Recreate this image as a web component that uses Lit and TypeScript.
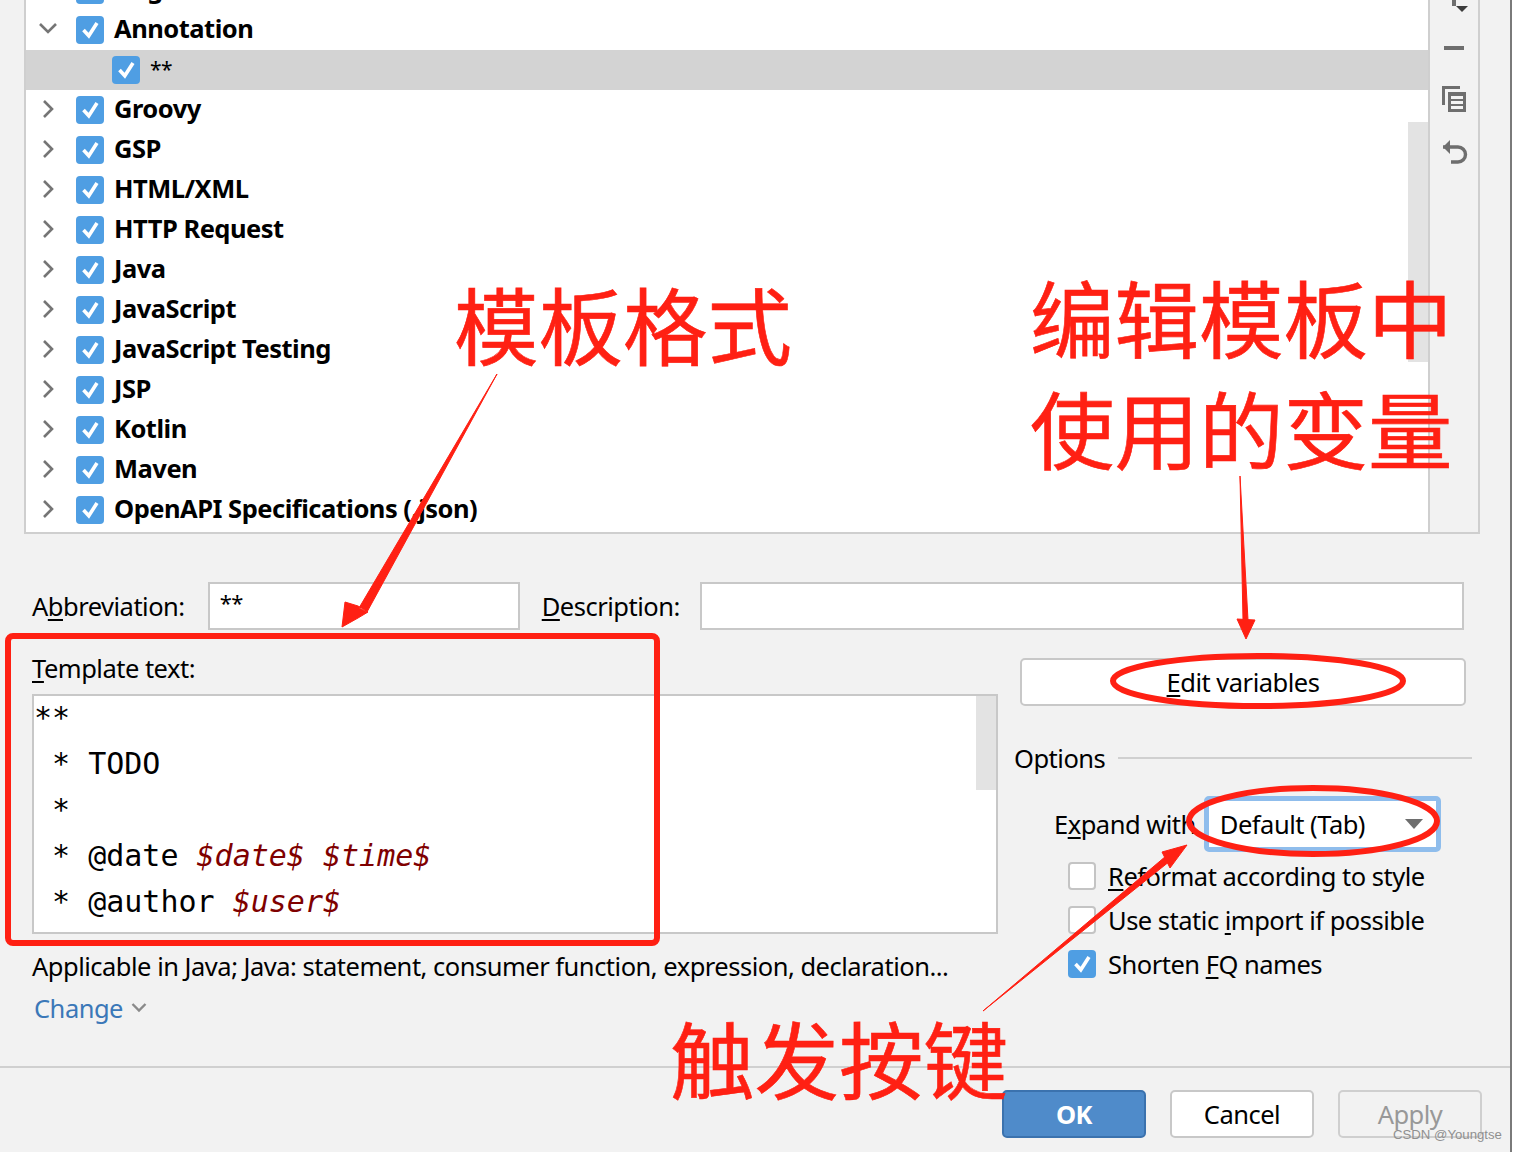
import { LitElement, html, css, svg } from "lit";
import { customElement } from "lit/decorators.js";

const check = html`<svg viewBox="0 0 28 28" width="28" height="28"><rect width="28" height="28" rx="4" fill="#4f9ee3"/><path d="M7.500 14L12.800 19.800L21 7" fill="none" stroke="#fff" stroke-width="3.600"/></svg>`;
const right = html`<svg class="chev" viewBox="0 0 16 20" width="16" height="20"><path d="M4 2l8 8-8 8" fill="none" stroke="#757575" stroke-width="2.6"/></svg>`;
const down = html`<svg class="chev" viewBox="0 0 20 16" width="20" height="16"><path d="M2 3l8 8 8-8" fill="none" stroke="#757575" stroke-width="2.6"/></svg>`;

const groups = ["Groovy", "GSP", "HTML/XML", "HTTP Request", "Java", "JavaScript", "JavaScript Testing", "JSP", "Kotlin", "Maven", "OpenAPI Specifications (.json)"];

@customElement("app-root")
export class AppRoot extends LitElement {
  static styles = css`
    :host { display: block; width: 1516px; height: 1152px; font-family: "Noto Sans", "Noto Sans CJK SC", sans-serif; color: #000; }
    .page { position: relative; width: 1516px; height: 1152px; background: #f2f2f2; overflow: hidden; font-size: 25.5px; line-height: 34px; letter-spacing: -.5px; }
    .edge { position: absolute; left: 1510px; top: 0; width: 6px; height: 1152px; background: #fff; border-left: 2px solid #7a7a7a; box-sizing: border-box; }
    u { text-decoration-thickness: 2px; text-underline-offset: 3px; }

    .panel { margin-left: 24px; width: 1456px; height: 534px; box-sizing: border-box; display: flex; border: 2px solid #cfcfcf; border-width: 0 2px 2px 2px; }
    .tree { position: relative; width: 1402px; height: 532px; background: #fff; overflow: hidden; }
    .rows { margin-top: -30px; }
    .row { display: flex; align-items: center; height: 40px; font-weight: 700; }
    .row.sel { background: #d3d3d3; font-weight: 400; padding-left: 86px; }
    .row.sel span { margin: -3px 0 0 10px; font-size: 21px; }
    .arrow { width: 44px; padding-right: 6px; margin-top: -2px; display: flex; justify-content: center; }
    .chev { display: block; }
    .row svg { flex: none; }
    .row .label { margin: -4px 0 0 10px; }
    .sb { position: absolute; left: 1382px; top: 122px; width: 20px; height: 240px; background: #e3e3e3; }
    .tools { width: 50px; border-left: 2px solid #cfcfcf; box-sizing: border-box; display: flex; flex-direction: column; align-items: center; }
    .tools svg { display: block; }

    .fields { display: flex; align-items: center; margin: 48px 0 0 32px; height: 48px; }
    .input { height: 48px; box-sizing: border-box; background: #fff; border: 2px solid #c8c8c8; font-size: 22px; line-height: 30px; padding: 3px 10px; }
    .abbr { width: 312px; margin-left: 23px; }
    .desc { width: 764px; margin-left: 20px; }
    .dlab { margin-left: 22px; }

    .main { display: flex; margin-top: 28px; }
    .left { margin: -7px 0 0 32px; width: 966px; }
    .tlabel { height: 43px; line-height: 34px; }
    .editor { position: relative; height: 240px; box-sizing: border-box; background: #fff; border: 2px solid #c8c8c8; font-family: "DejaVu Sans Mono", monospace; font-size: 30px; line-height: 46px; letter-spacing: 0; white-space: pre; overflow: hidden; }
    .code { margin-top: -1px; }
    .editor i { color: #7f0000; }
    .esb { position: absolute; right: 0; top: 0; width: 20px; height: 94px; background: #e3e3e3; }
    .app { margin-top: 15px; white-space: nowrap; }
    .change { margin: 8px 0 0 2px; display: flex; align-items: center; gap: 8px; color: #3b78b8; }
    .right { margin-left: 22px; width: 460px; }
    .btn { display: flex; align-items: center; justify-content: center; box-sizing: border-box; height: 48px; background: #fff; border: 2px solid #c8c8c8; border-radius: 5px; }
    .edit { width: 446px; }
    .opt { display: flex; align-items: center; margin: 35px 0 0 -6px; gap: 13px; }
    .opt div { width: 354px; height: 2px; background: #d0d0d0; }
    .expand { display: flex; align-items: center; margin: 21px 0 -6px 34px; }
    .combo { margin-left: 8px; width: 237px; height: 56px; box-sizing: border-box; border: 5px solid #8fbdec; border-radius: 5px; background: #fff; display: flex; align-items: center; justify-content: space-between; padding: 0 13px 0 11px; }
    .tri { width: 0; height: 0; border: 9px solid transparent; border-top: 10px solid #6e6e6e; border-bottom: 0; }
    .ck { display: flex; align-items: center; gap: 12px; height: 28px; margin: 16px 0 0 48px; }
    .box { width: 28px; height: 28px; box-sizing: border-box; background: #fff; border: 2px solid #c4c4c4; border-radius: 4px; }
    .ck svg { display: block; }

    .sep { height: 2px; background: #d0d0d0; margin-top: 41px; }
    .foot { display: flex; gap: 24px; margin: 22px 0 0 1002px; }
    .foot .btn { width: 144px; }
    .ok { background: #4f8bca !important; border-color: #3b72ae !important; color: #fff; font-weight: 700; }
    .apply { background: transparent !important; border-color: #cfcfcf !important; color: #989898; }

    .mark { position: absolute; left: 1393px; top: 1127px; font-size: 13.2px; line-height: 16px; color: #8f8f8f; white-space: nowrap; font-family: "Liberation Sans", sans-serif; letter-spacing: 0; }
    .ink { position: absolute; left: 0; top: 0; pointer-events: none; }
    .note { position: absolute; color: #ff2013; font-family: "Noto Sans CJK SC", sans-serif; font-size: 84.5px; line-height: 100px; letter-spacing: 0; white-space: nowrap; -webkit-text-stroke: .6px #ff2013; }
    .n1 { left: 454px; top: 272px; }
    .n2 { left: 1030px; top: 265px; }
    .n3 { left: 1030px; top: 376px; }
    .n4 { left: 670px; top: 1006px; }
  `;

  render() {
    return html`<div class="page">
      <div class="panel">
        <div class="tree">
          <div class="rows">
            <div class="row"><div class="arrow">${right}</div>${check}<span class="label">Angular</span></div>
            <div class="row"><div class="arrow">${down}</div>${check}<span class="label">Annotation</span></div>
            <div class="row sel">${check}<span>**</span></div>
            ${groups.map((g) => html`<div class="row"><div class="arrow">${right}</div>${check}<span class="label">${g}</span></div>`)}
          </div>
          <div class="sb"></div>
        </div>
        <div class="tools">
          <svg width="48" height="170" viewBox="0 0 48 170">
            <path d="M22 0h4v6h-4z" fill="#6e6e6e"/><path d="M26 6h12l-6 6z" fill="#3c3c3c"/>
            <path d="M14 46h20v4H14z" fill="#6e6e6e"/>
            <path d="M12 86h18v3H15v16h-3z" fill="#6e6e6e"/>
            <path fill-rule="evenodd" d="M18 92h18v20H18zM21 96v3h12v-3zM21 101v3h12v-3zM21 106v3h12v-3z" fill="#6e6e6e"/>
            <path d="M20 140l-7 7 7 7" fill="#6e6e6e"/>
            <path d="M13 147h15a7.500 7.500 0 0 1 0 15h-7" fill="none" stroke="#6e6e6e" stroke-width="3.400"/>
          </svg>
        </div>
      </div>

      <div class="fields">
        <span>A<u>b</u>breviation:</span>
        <div class="input abbr">**</div>
        <span class="dlab"><u>D</u>escription:</span>
        <div class="input desc"></div>
      </div>

      <div class="main">
        <div class="left">
          <div class="tlabel"><u>T</u>emplate text:</div>
          <div class="editor"><div class="code">**
 * TODO
 *
 * @date <i>$date$</i> <i>$time$</i>
 * @author <i>$user$</i></div><div class="esb"></div></div>
          <div class="app">Applicable in Java; Java: statement, consumer function, expression, declaration...</div>
          <div class="change">Change <svg width="16" height="12" viewBox="0 0 16 12"><path d="M1.500 2l6.500 6.500L14.500 2" fill="none" stroke="#8a8a8a" stroke-width="2.400"/></svg></div>
        </div>
        <div class="right">
          <div class="btn edit"><span><u>E</u>dit variables</span></div>
          <div class="opt"><span>Options</span><div></div></div>
          <div class="expand"><span>E<u>x</u>pand with</span>
            <div class="combo"><span>Default (Tab)</span><div class="tri"></div></div>
          </div>
          <div class="ck"><div class="box"></div><span><u>R</u>eformat according to style</span></div>
          <div class="ck"><div class="box"></div><span>Use static <u>i</u>mport if possible</span></div>
          <div class="ck">${check}<span>Shorten <u>F</u>Q names</span></div>
        </div>
      </div>

      <div class="sep"></div>
      <div class="foot">
        <div class="btn ok">OK</div>
        <div class="btn">Cancel</div>
        <div class="btn apply">Apply</div>
      </div>
      <div class="edge"></div>
      <div class="mark">CSDN @Youngtse</div>

      <div class="note n1">模板格式</div>
      <div class="note n2">编辑模板中</div>
      <div class="note n3">使用的变量</div>
      <div class="note n4">触发按键</div>
      <svg class="ink" width="1516" height="1152" viewBox="0 0 1516 1152">
        ${svg`
          <rect x="8" y="636" width="649" height="307" rx="5" fill="none" stroke="#ff2013" stroke-width="6"/>
          <ellipse cx="1258" cy="681" rx="145" ry="25" fill="none" stroke="#ff2013" stroke-width="6"/>
          <ellipse cx="1313" cy="821" rx="124" ry="33" fill="none" stroke="#ff2013" stroke-width="6"/>
          <path d="M497 374L359 608L367 612L497 374Z M342 627L345 602L358 606L368 612L358 618Z" fill="#ff2013" stroke="#ff2013" stroke-width="1"/>
          <path d="M1240 476L1243 620L1248 620Z M1246 639L1237 619L1255 620Z" fill="#ff2013" stroke="#ff2013"/>
          <path d="M983 1011L1166 856L1170 861Z M1187 845L1170 868L1162 852Z" fill="#ff2013" stroke="#ff2013"/>
        `}
      </svg>
    </div>`;
  }
}
